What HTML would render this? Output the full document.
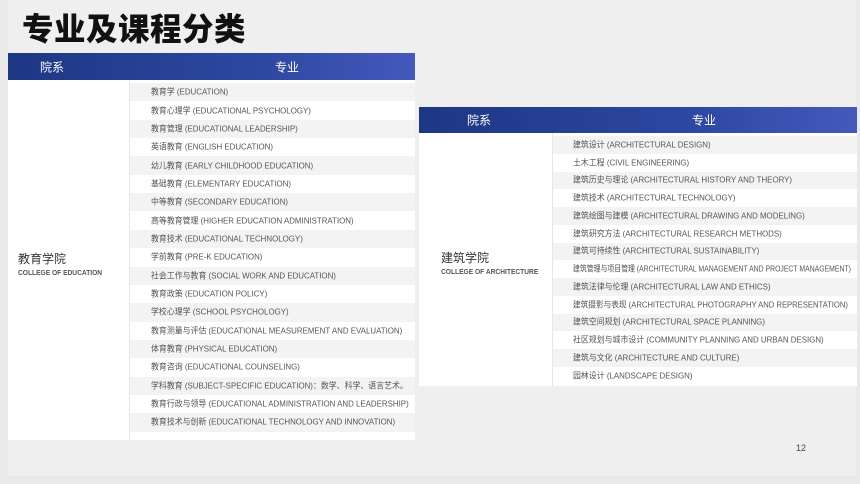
<!DOCTYPE html>
<html><head><meta charset="utf-8"><style>
*{margin:0;padding:0;box-sizing:border-box}
body{width:860px;height:484px;overflow:hidden;background:#e9e9e9;font-family:"Liberation Sans","Noto Sans CJK SC",sans-serif;position:relative}
.panel{position:absolute;left:8px;top:0;width:848px;height:476px;background:#efefef}
h1{position:absolute;left:22px;top:4px;font-size:31.5px;font-weight:900;color:#111;letter-spacing:0.5px;font-family:"Noto Sans CJK SC",sans-serif}
.hd{position:absolute;background:linear-gradient(90deg,#1e3784,#2c47a0 60%,#4559bd);color:#fff;font-size:12px}
.hd span{position:absolute;top:50%;transform:translateY(-50%)}
.tb{position:absolute;background:#fff}
.row{position:absolute;font-size:8.6px;color:#555;white-space:nowrap;line-height:1}
.row.g{background:#f3f3f3}
.row span{position:absolute;top:50%;transform:translateY(-50%) scaleX(0.92);transform-origin:left center}
.dep{position:absolute;color:#333}
.dep b{font-weight:normal;font-size:12px;display:block}
.dep i{font-style:normal;font-size:7px;font-weight:bold;color:#555;display:block;margin-top:3px;transform:scaleX(0.95);transform-origin:left}
</style></head><body>
<div class="panel"></div>
<h1>专业及课程分类</h1>

<div class="hd" style="left:8px;top:53px;width:407px;height:27px"><span style="left:32px">院系</span><span style="left:267px">专业</span></div>
<div class="tb" style="left:8px;top:80px;width:407px;height:360px"></div>
<div style="position:absolute;left:129px;top:80px;width:1px;height:360px;background:#e6e6e6"></div>
<div class="dep" style="left:18px;top:250px"><b>教育学院</b><i>COLLEGE OF EDUCATION</i></div>
<div id="L"></div>

<div class="hd" style="left:419px;top:107px;width:438px;height:26px"><span style="left:48px">院系</span><span style="left:273px">专业</span></div>
<div class="tb" style="left:419px;top:133px;width:438px;height:253px"></div>
<div style="position:absolute;left:552px;top:133px;width:1px;height:253px;background:#e6e6e6"></div>
<div class="dep" style="left:441px;top:249px"><b>建筑学院</b><i>COLLEGE OF ARCHITECTURE</i></div>
<div id="R"></div>

<div style="position:absolute;left:796px;top:443px;font-size:9px;color:#444">12</div>
<script>
var L=["教育学 (EDUCATION)","教育心理学 (EDUCATIONAL PSYCHOLOGY)","教育管理 (EDUCATIONAL LEADERSHIP)","英语教育 (ENGLISH EDUCATION)","幼儿教育 (EARLY CHILDHOOD EDUCATION)","基础教育 (ELEMENTARY EDUCATION)","中等教育 (SECONDARY EDUCATION)","高等教育管理 (HIGHER EDUCATION ADMINISTRATION)","教育技术 (EDUCATIONAL TECHNOLOGY)","学前教育 (PRE-K EDUCATION)","社会工作与教育 (SOCIAL WORK AND EDUCATION)","教育政策 (EDUCATION POLICY)","学校心理学 (SCHOOL PSYCHOLOGY)","教育测量与评估 (EDUCATIONAL MEASUREMENT AND EVALUATION)","体育教育 (PHYSICAL EDUCATION)","教育咨询 (EDUCATIONAL COUNSELING)","学科教育 (SUBJECT-SPECIFIC EDUCATION)：数学、科学、语言艺术。","教育行政与领导 (EDUCATIONAL ADMINISTRATION AND LEADERSHIP)","教育技术与创新 (EDUCATIONAL TECHNOLOGY AND INNOVATION)"];
var R=["建筑设计 (ARCHITECTURAL DESIGN)","土木工程 (CIVIL ENGINEERING)","建筑历史与理论 (ARCHITECTURAL HISTORY AND THEORY)","建筑技术 (ARCHITECTURAL TECHNOLOGY)","建筑绘图与建模 (ARCHITECTURAL DRAWING AND MODELING)","建筑研究方法 (ARCHITECTURAL RESEARCH METHODS)","建筑可持续性 (ARCHITECTURAL SUSTAINABILITY)","建筑管理与项目管理 (ARCHITECTURAL MANAGEMENT AND PROJECT MANAGEMENT)","建筑法律与伦理 (ARCHITECTURAL LAW AND ETHICS)","建筑摄影与表现 (ARCHITECTURAL PHOTOGRAPHY AND REPRESENTATION)","建筑空间规划 (ARCHITECTURAL SPACE PLANNING)","社区规划与城市设计 (COMMUNITY PLANNING AND URBAN DESIGN)","建筑与文化 (ARCHITECTURE AND CULTURE)","园林设计 (LANDSCAPE DESIGN)"];
var h='';
L.forEach(function(t,i){h+='<div class="row'+(i%2==0?' g':'')+'" style="left:130px;top:'+(83+i*18.35)+'px;width:285px;height:18.35px"><span style="left:21px">'+t+'</span></div>';});
document.getElementById('L').outerHTML=h;h='';
R.forEach(function(t,i){var sc=i==7?0.8:(i==9?0.89:0.92);h+='<div class="row'+(i%2==0?' g':'')+'" style="left:553px;top:'+(136+i*17.75)+'px;width:304px;height:17.75px"><span style="left:20px;transform:translateY(-50%) scaleX('+sc+')">'+t+'</span></div>';});
document.getElementById('R').outerHTML=h;
</script>
</body></html>
